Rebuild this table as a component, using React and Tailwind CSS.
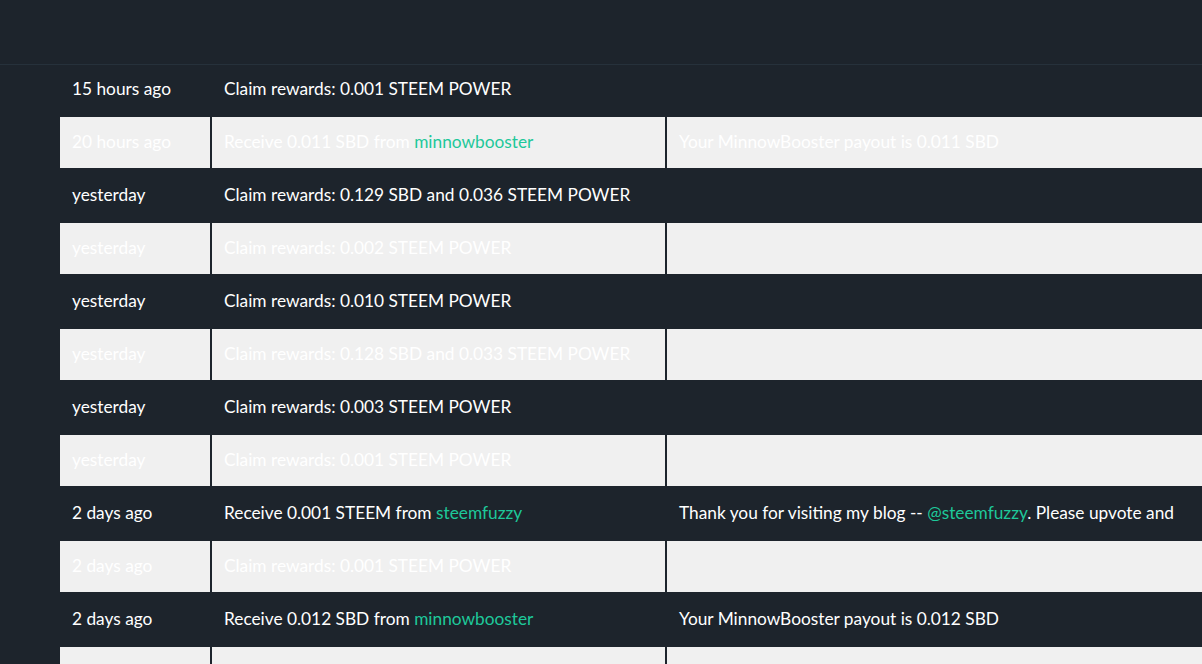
const ROWS = [
  { when: '15 hours ago', what: ['Claim rewards: 0.001 STEEM POWER'], memo: null },
  { when: '20 hours ago', what: ['Receive 0.011 SBD from ', 'minnowbooster'], memo: ['Your MinnowBooster payout is 0.011 SBD'] },
  { when: 'yesterday', what: ['Claim rewards: 0.129 SBD and 0.036 STEEM POWER'], memo: null },
  { when: 'yesterday', what: ['Claim rewards: 0.002 STEEM POWER'], memo: null },
  { when: 'yesterday', what: ['Claim rewards: 0.010 STEEM POWER'], memo: null },
  { when: 'yesterday', what: ['Claim rewards: 0.128 SBD and 0.033 STEEM POWER'], memo: null },
  { when: 'yesterday', what: ['Claim rewards: 0.003 STEEM POWER'], memo: null },
  { when: 'yesterday', what: ['Claim rewards: 0.001 STEEM POWER'], memo: null },
  { when: '2 days ago', what: ['Receive 0.001 STEEM from ', 'steemfuzzy'], memo: ['Thank you for visiting my blog -- ', '@steemfuzzy', '. Please upvote and'] },
  { when: '2 days ago', what: ['Claim rewards: 0.001 STEEM POWER'], memo: null },
  { when: '2 days ago', what: ['Receive 0.012 SBD from ', 'minnowbooster'], memo: ['Your MinnowBooster payout is 0.012 SBD'] },
  { when: '', what: null, memo: null },
]

// odd parts are account links
function Parts({ parts }) {
  if (!parts) return null
  return (
    <span>
      {parts.map((p, i) =>
        i % 2 === 1
          ? <span key={i} className="text-[#1ec89a]">{p}</span>
          : <span key={i}>{p}</span>
      )}
    </span>
  )
}

export default function App() {
  return (
    <div
      className="w-[1202px] h-[664px] overflow-hidden bg-[#1d242c] text-white text-[17.3px]"
      style={{ fontFamily: 'Lato, "Open Sans", sans-serif' }}
    >
      <div className="h-[65px] border-b border-[#26313b]" />
      <div className="-mt-px flex flex-col gap-[2px] pl-[60px]">
        {ROWS.map((row, idx) => {
          const light = idx % 2 === 1
          const cell = `h-[51px] flex items-center px-3 pb-[2px] whitespace-nowrap overflow-hidden ${light ? 'bg-[#f0f0f0]' : ''}`
          return (
            <div key={idx} className="flex gap-[2px]">
              <div className={`${cell} w-[150px] shrink-0`}>{row.when}</div>
              <div className={`${cell} w-[453px] shrink-0`}><Parts parts={row.what} /></div>
              <div className={`${cell} w-[700px] shrink-0`}><Parts parts={row.memo} /></div>
            </div>
          )
        })}
      </div>
    </div>
  )
}
